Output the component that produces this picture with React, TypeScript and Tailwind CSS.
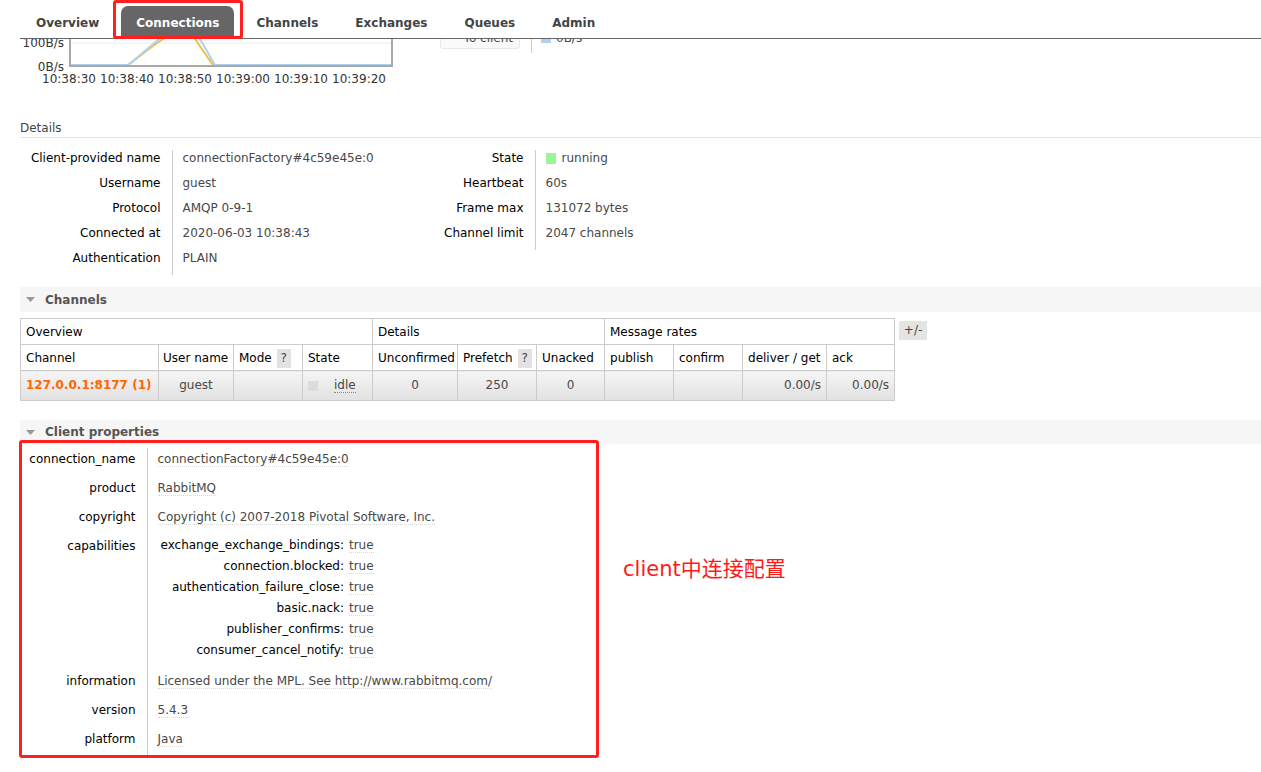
import React from "react";

const tabs = ["Overview", "Connections", "Channels", "Exchanges", "Queues", "Admin"];

const detailsLeft = [
  ["Client-provided name", "connectionFactory#4c59e45e:0"],
  ["Username", "guest"],
  ["Protocol", "AMQP 0-9-1"],
  ["Connected at", "2020-06-03 10:38:43"],
  ["Authentication", "PLAIN"],
];

const detailsRight = [
  ["State", "running"],
  ["Heartbeat", "60s"],
  ["Frame max", "131072 bytes"],
  ["Channel limit", "2047 channels"],
];

const capabilities = [
  "exchange_exchange_bindings",
  "connection.blocked",
  "authentication_failure_close",
  "basic.nack",
  "publisher_confirms",
  "consumer_cancel_notify",
];

const timeLabels = ["10:38:30", "10:38:40", "10:38:50", "10:39:00", "10:39:10", "10:39:20"];

const NavBar = () => (
  <div className="absolute top-0 inset-x-0 h-[39px] bg-white z-10">
    <div className="ml-[20px] h-full border-b border-[#666] flex pl-[1px] gap-[7px]">
      {tabs.map((t) => (
        <div
          key={t}
          className={`relative mt-[6px] h-[32px] pt-[2px] leading-[30px] px-[15px] rounded-t-[7px] font-bold ${
            t === "Connections" ? "bg-[#666] text-white" : "text-[#444]"
          }`}
        >
          {t}
          {t === "Connections" && (
            <span className="absolute left-[-8px] right-[-9px] top-[-6px] bottom-[-1px] border-[3px] border-[#ff1f1f] rounded-[3px]" />
          )}
        </div>
      ))}
    </div>
  </div>
);

const RateChart = () => (
  <div className="relative w-[372px] h-[90px] shrink-0 text-[#333]">
    <span className="absolute right-[328px] top-[36px]">100B/s</span>
    <span className="absolute right-[328px] top-[60px]">0B/s</span>
    <svg className="absolute left-[49px] top-0" width="325" height="68">
      <line x1="2" y1="43" x2="322" y2="43" stroke="#ececec" strokeWidth="1" />
      <polyline
        points="2,65 59,65 88,43 99,36 120,30 126,39 144,65 322,65"
        fill="none"
        stroke="#f0c040"
        strokeWidth="2"
      />
      <polyline
        points="2,65 59,65 89,40 101,22 125,22 131,39 146,65 322,65"
        fill="none"
        stroke="#acd2f2"
        strokeWidth="2"
      />
      <rect x="1" y="-10" width="322" height="76" fill="none" stroke="#a8a8a8" strokeWidth="2" />
    </svg>
    <div className="absolute left-[20px] top-[72px] flex">
      {timeLabels.map((l) => (
        <span key={l} className="w-[58px] text-center">
          {l}
        </span>
      ))}
    </div>
  </div>
);

const ChartRow = () => (
  <div className="flex items-start ml-[20px] h-[90px]">
    <RateChart />
    <div className="ml-[48px] mt-[25px] w-[80px] h-[24px] leading-[24px] text-right pr-[6px] bg-[#fafafa] border border-[#e8e8e8] rounded-[3px] text-[#444]">
      To client
    </div>
    <div className="ml-[11px] w-px h-[53px] bg-[#ccc]" />
    <div className="ml-[9px] mt-[31px] flex items-center gap-[5px] h-[14px]">
      <span className="w-[10px] h-[10px] bg-[#acd2f2]" />
      <span>0B/s</span>
    </div>
  </div>
);

const FactsTable = ({ rows, labelWidth, valueWidth }: { rows: string[][]; labelWidth: string; valueWidth: string }) => (
  <table className="border-collapse">
    <tbody>
      {rows.map(([k, v]) => (
        <tr key={k}>
          <th className={`${labelWidth} font-normal text-right text-black align-top pt-[1px] pb-[9px] pr-[11px] border-r border-[#ccc]`}>
            {k}
          </th>
          <td className={`${valueWidth} align-top pt-[1px] pb-[9px] pl-[10px]`}>
            {k === "State" ? (
              <span className="flex items-center gap-[6px]">
                <span className="w-[10px] h-[11px] bg-[#98f898]" />
                {v}
              </span>
            ) : (
              v
            )}
          </td>
        </tr>
      ))}
    </tbody>
  </table>
);

const SectionHeader = ({ title, className }: { title: string; className: string }) => (
  <div className={`ml-[20px] flex items-center bg-[#f6f6f6] pl-[6px] gap-[10px] font-bold text-[#555] ${className}`}>
    <svg width="9" height="5">
      <polygon points="0,0 9,0 4.5,5" fill="#999" />
    </svg>
    <span className="pt-[1px]">{title}</span>
  </div>
);

const Help = () => (
  <span className="inline-block align-middle ml-[5px] w-[14px] h-[19px] leading-[19px] text-center bg-[#e2e2e2] text-[#444]">
    ?
  </span>
);

const th = "border border-[#ccc] px-[5px] pt-[1px] text-left font-normal text-black whitespace-nowrap overflow-hidden";
const td = "border border-[#ccc] px-[5px] whitespace-nowrap bg-linear-to-b from-[#f5f5f5] to-[#e1e1e1]";

const ChannelsTable = () => (
  <div className="ml-[20px] mt-[6px] flex items-start">
    <table className="table-fixed border-collapse w-[875px] border border-[#ccc]">
      <colgroup>
        <col className="w-[138px]" />
        <col className="w-[75px]" />
        <col className="w-[69px]" />
        <col className="w-[70px]" />
        <col className="w-[85px]" />
        <col className="w-[79px]" />
        <col className="w-[68px]" />
        <col className="w-[69px]" />
        <col className="w-[69px]" />
        <col className="w-[84px]" />
        <col className="w-[68px]" />
      </colgroup>
      <thead>
        <tr className="h-[26px]">
          <th colSpan={4} className={th}>Overview</th>
          <th colSpan={3} className={th}>Details</th>
          <th colSpan={4} className={th}>Message rates</th>
        </tr>
        <tr className="h-[26px]">
          <th className={th}>Channel</th>
          <th className={`${th} !px-[4px]`}>User name</th>
          <th className={th}>
            Mode<Help />
          </th>
          <th className={th}>State</th>
          <th className={th}>Unconfirmed</th>
          <th className={th}>
            Prefetch<Help />
          </th>
          <th className={th}>Unacked</th>
          <th className={th}>publish</th>
          <th className={th}>confirm</th>
          <th className={th}>deliver / get</th>
          <th className={th}>ack</th>
        </tr>
      </thead>
      <tbody>
        <tr className="h-[30px]">
          <td className={`${td} font-bold text-[#f60]`}>127.0.0.1:8177 (1)</td>
          <td className={`${td} text-center`}>guest</td>
          <td className={td} />
          <td className={td}>
            <span className="flex items-center">
              <span className="w-[10px] h-[10px] bg-[#dcdcdc] mr-[16px]" />
              <span className="border-b border-dotted border-[#888] leading-[14px]">idle</span>
            </span>
          </td>
          <td className={`${td} text-center`}>0</td>
          <td className={`${td} text-center`}>250</td>
          <td className={`${td} text-center`}>0</td>
          <td className={td} />
          <td className={td} />
          <td className={`${td} text-right`}>0.00/s</td>
          <td className={`${td} text-right`}>0.00/s</td>
        </tr>
      </tbody>
    </table>
    <span className="ml-[4px] mt-[3px] w-[28px] h-[19px] leading-[19px] text-center bg-[#e4e4e4] text-[#444]">
      +/-
    </span>
  </div>
);

const Val = ({ children }: { children: React.ReactNode }) => (
  <span className="border-b border-dotted border-[#d8d8d8]">{children}</span>
);

const PropRow = ({ label, children, last }: { label: string; children: React.ReactNode; last?: boolean }) => (
  <tr>
    <th
      className={`w-[125px] font-normal text-right text-black align-top pt-[4px] pr-[11px] border-r border-[#ccc] ${
        last ? "pb-[8px]" : "pb-[10px]"
      }`}
    >
      {label}
    </th>
    <td className={`align-top pt-[4px] pl-[10px] ${last ? "pb-[8px]" : "pb-[10px]"}`}>{children}</td>
  </tr>
);

const ClientProperties = () => (
  <div className="ml-[19px] -mt-[4px] flex items-start">
    <div className="relative w-[580px] border-[3px] border-[#ff1f1f] rounded-[3px] pt-[5px]">
      <table className="border-collapse">
        <tbody>
          <PropRow label="connection_name">
            <Val>connectionFactory#4c59e45e:0</Val>
          </PropRow>
          <PropRow label="product">
            <Val>RabbitMQ</Val>
          </PropRow>
          <PropRow label="copyright">
            <Val>Copyright (c) 2007-2018 Pivotal Software, Inc.</Val>
          </PropRow>
          <tr>
            <th className="w-[125px] font-normal text-right text-black align-top pt-[4px] pb-[5px] pr-[11px] border-r border-[#ccc]">
              capabilities
            </th>
            <td className="align-top pt-[2px] pb-[7px] pl-[10px]">
              <table className="border-collapse">
                <tbody>
                  {capabilities.map((c) => (
                    <tr key={c}>
                      <td className="text-right text-black pl-[3px] pt-[1px] pb-[5px]">{c}:</td>
                      <td className="pl-[5px] pt-[1px] pb-[5px]">
                        <Val>true</Val>
                      </td>
                    </tr>
                  ))}
                </tbody>
              </table>
            </td>
          </tr>
          <PropRow label="information">
            <Val>Licensed under the MPL. See http://www.rabbitmq.com/</Val>
          </PropRow>
          <PropRow label="version">
            <Val>5.4.3</Val>
          </PropRow>
          <PropRow label="platform" last>
            <Val>Java</Val>
          </PropRow>
        </tbody>
      </table>
    </div>
    <div className="ml-[24px] mt-[113px] text-[21px] leading-[28px] text-[#ff1a1a] font-['DejaVu_Sans','Noto_Sans_CJK_SC',sans-serif]">
      client<span className="font-['Noto_Sans_CJK_SC',sans-serif]">中连接配置</span>
    </div>
  </div>
);

export default function App() {
  return (
    <div className="relative w-[1261px] h-[772px] overflow-hidden bg-white text-[12px] leading-[15px] text-[#484848] font-['DejaVu_Sans',sans-serif]">
      <NavBar />
      <ChartRow />
      <div className="ml-[20px] mt-[30px] pt-[1px] pb-[1px] border-b border-[#e2e2e2] text-[#444]">Details</div>
      <div className="ml-[20px] mt-[12px] flex items-start">
        <FactsTable rows={detailsLeft} labelWidth="w-[152px]" valueWidth="w-[261px]" />
        <FactsTable rows={detailsRight} labelWidth="w-[102px]" valueWidth="w-[200px]" />
      </div>
      <SectionHeader title="Channels" className="mt-[12px] h-[25px]" />
      <ChannelsTable />
      <SectionHeader title="Client properties" className="mt-[19px] h-[24px]" />
      <ClientProperties />
    </div>
  );
}
